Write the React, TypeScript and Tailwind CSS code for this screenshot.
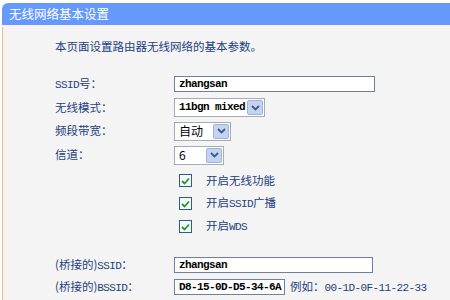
import React from 'react';

const cjk = '"Noto Sans CJK SC", sans-serif';

function Latin({ children }: { children: React.ReactNode }) {
  return <span className="font-mono text-[11px] tracking-[-0.6px] whitespace-nowrap">{children}</span>;
}

function Label({ children }: { children: React.ReactNode }) {
  return <div className="w-[119px] shrink-0 text-[11.5px] text-[#243f7d] whitespace-nowrap">{children}</div>;
}

function Arrow() {
  return (
    <div className="w-[16px] h-full flex items-center justify-center bg-[#c3d3f0] border border-[#9fb4da] rounded-[2px]">
      <svg width="9" height="6" viewBox="0 0 9 6">
        <path d="M1 1 L4.5 4.5 L8 1" fill="none" stroke="#3d5a8e" strokeWidth="1.8" />
      </svg>
    </div>
  );
}

function Select({ value, width, latin }: { value: string; width: string; latin?: boolean }) {
  return (
    <div className={`${width} h-[19px] flex items-stretch bg-white border border-[#a5acb5] p-[1px]`}>
      <div
        className={
          latin
            ? 'flex-1 flex items-center pl-[3px] text-black whitespace-nowrap text-[11px] tracking-[-0.6px] font-bold font-mono'
            : 'flex-1 flex items-center pl-[3px] text-black whitespace-nowrap text-[12px]'
        }
      >
        {value}
      </div>
      <Arrow />
    </div>
  );
}

function TextBox({ value, width }: { value: string; width: string }) {
  return (
    <div
      className={`${width} h-[16px] shrink-0 flex items-center bg-white border border-[#6f7f9f] pl-[4px] whitespace-nowrap text-[11px] tracking-[-0.6px] font-bold text-black font-mono`}
    >
      {value}
    </div>
  );
}

function Check({ children }: { children: React.ReactNode }) {
  return (
    <div className="h-[23px] flex items-center pl-[176px]">
      <div className="w-[13px] h-[13px] border border-[#2a5d8f] bg-[#f7f9fb] flex items-center justify-center">
        <svg width="9" height="8" viewBox="0 0 9 8">
          <path d="M1 4 L3.5 6.5 L8 1.5" fill="none" stroke="#1f9a2a" strokeWidth="1.8" />
        </svg>
      </div>
      <div className="ml-[14px] text-[11.5px] text-[#243f7d] whitespace-nowrap">{children}</div>
    </div>
  );
}

export default function App() {
  return (
    <div className="w-[450px] h-[300px] overflow-hidden bg-white pt-[3px] pl-[2px]" style={{ fontFamily: cjk }}>
      {/* Header */}
      <div className="h-[22px] bg-[#6699fc] rounded-tl-[6px] flex items-center pl-[7px] text-white text-[12.5px]">
        无线网络基本设置
      </div>
      <div className="h-[2px] bg-[#fbeef4]" />

      {/* Body */}
      <div className="h-[300px] bg-[#f4f4f4] border-l border-[#f1c27b]">
        <div className="pl-[52px] pt-[10px] h-[30px] flex items-center text-[11.5px] text-[#243f7d]">
          本页面设置路由器无线网络的基本参数。
        </div>

        <div className="mt-[15px] pl-[52px] flex flex-col">
          <div className="h-[24px] flex items-center">
            <Label>
              <Latin>SSID</Latin>号：
            </Label>
            <TextBox value="zhangsan" width="w-[201px]" />
          </div>
          <div className="h-[23px] flex items-center">
            <Label>无线模式：</Label>
            <Select value="11bgn mixed" width="w-[91px]" latin />
          </div>
          <div className="h-[24px] flex items-center">
            <Label>频段带宽：</Label>
            <Select value="自动" width="w-[57px]" />
          </div>
          <div className="h-[24px] flex items-center">
            <Label>信道：</Label>
            <Select value="6" width="w-[50px]" />
          </div>
        </div>

        <div className="mt-[2px] flex flex-col">
          <Check>开启无线功能</Check>
          <Check>
            开启<Latin>SSID</Latin>广播
          </Check>
          <Check>
            开启<Latin>WDS</Latin>
          </Check>
        </div>

        <div className="mt-[16px] pl-[52px] flex flex-col">
          <div className="h-[22px] flex items-center">
            <Label>
              (桥接的)<Latin>SSID</Latin>：
            </Label>
            <TextBox value="zhangsan" width="w-[199px]" />
          </div>
          <div className="h-[22px] flex items-center">
            <Label>
              (桥接的)<Latin>BSSID</Latin>：
            </Label>
            <TextBox value="D8-15-0D-D5-34-6A" width="w-[111px]" />
            <div className="ml-[5px] text-[11.5px] text-[#243f7d] whitespace-nowrap">
              例如：<Latin>00-1D-0F-11-22-33</Latin>
            </div>
          </div>
          <div className="h-[22px] flex items-start pl-[119px] pt-[2px]">
            <div className="w-[40px] h-[16px] bg-white border border-[#a5acb5]" />
          </div>
        </div>
      </div>
    </div>
  );
}
